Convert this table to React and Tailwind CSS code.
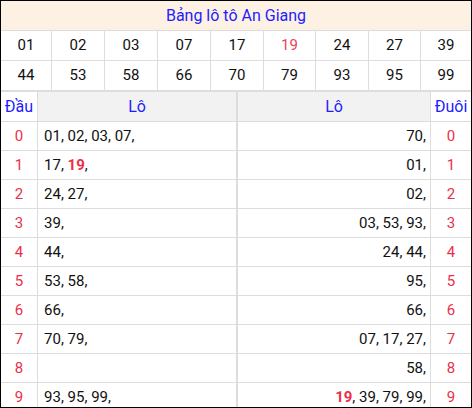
import React from "react";

const top = ["01", "02", "03", "07", "17", "19", "24", "27", "39"];
const bottom = ["44", "53", "58", "66", "70", "79", "93", "95", "99"];

const dau = [
  ["01", "02", "03", "07"],
  ["17", "19"],
  ["24", "27"],
  ["39"],
  ["44"],
  ["53", "58"],
  ["66"],
  ["70", "79"],
  [],
  ["93", "95", "99"],
];
const duoi = [
  ["70"],
  ["01"],
  ["02"],
  ["03", "53", "93"],
  ["24", "44"],
  ["95"],
  ["66"],
  ["07", "17", "27"],
  ["58"],
  ["19", "39", "79", "99"],
];

const colW = [
  "w-[51px]",
  "w-[53px]",
  "w-[53px]",
  "w-[53px]",
  "w-[53px]",
  "w-[52px]",
  "w-[53px]",
  "w-[52px]",
  "flex-1",
];

function Nums({ list }) {
  return (
    <span className="whitespace-pre">
      {list.map((n, i) => (
        <React.Fragment key={i}>
          {i > 0 ? " " : ""}
          {n === "19" ? (
            <span className="font-bold text-[#ec3049]">{n}</span>
          ) : (
            <span>{n}</span>
          )}
          ,
        </React.Fragment>
      ))}
    </span>
  );
}

export default function App() {
  return (
    <div
      className="w-[472px] h-[408px] overflow-hidden border border-black bg-white text-[15px] text-[#111]"
      style={{ fontFamily: "Roboto, 'Liberation Sans', sans-serif" }}
    >
      <div className="h-[30px] border-b border-[#ddd] bg-[#fdf1e4] flex items-center justify-center text-[16px] text-[#1d1dff]">
        Bảng lô tô An Giang
      </div>
      {[top, bottom].map((row, r) => (
        <div
          key={r}
          className={
            r === 0
              ? "flex h-[30px] border-b border-[#ddd]"
              : "flex h-[31px] border-b-2 border-[#ddd]"
          }
        >
          {row.map((n, i) => (
            <div
              key={i}
              className={
                colW[i] +
                " flex items-center justify-center " +
                (i < 8 ? "border-r border-[#ddd] " : "") +
                (n === "19" ? "text-[#ef4153]" : "")
              }
            >
              {n}
            </div>
          ))}
        </div>
      ))}
      <div className="flex h-[30px] border-b border-[#ddd] text-[16px] text-[#1d1dff]">
        <div className="w-[37px] border-r border-[#ddd] flex items-center justify-center">
          Đầu
        </div>
        <div className="w-[200px] border-r-2 border-[#ddd] bg-[#f2f2f2] flex items-center justify-center">
          Lô
        </div>
        <div className="w-[193px] border-r border-[#ddd] bg-[#f2f2f2] flex items-center justify-center">
          Lô
        </div>
        <div className="flex-1 flex items-center justify-center">Đuôi</div>
      </div>
      {dau.map((d, i) => (
        <div key={i} className="flex h-[29px] border-b border-[#ddd] shrink-0">
          <div className="w-[37px] border-r border-[#ddd] flex items-center justify-center text-[#ec3049]">
            {i}
          </div>
          <div className="w-[200px] border-r-2 border-[#ddd] flex items-center pl-[6px]">
            <Nums list={d} />
          </div>
          <div className="w-[193px] border-r border-[#ddd] flex items-center justify-end pr-[4px]">
            <Nums list={duoi[i]} />
          </div>
          <div className="flex-1 flex items-center justify-center text-[#ec3049]">
            {i}
          </div>
        </div>
      ))}
    </div>
  );
}
